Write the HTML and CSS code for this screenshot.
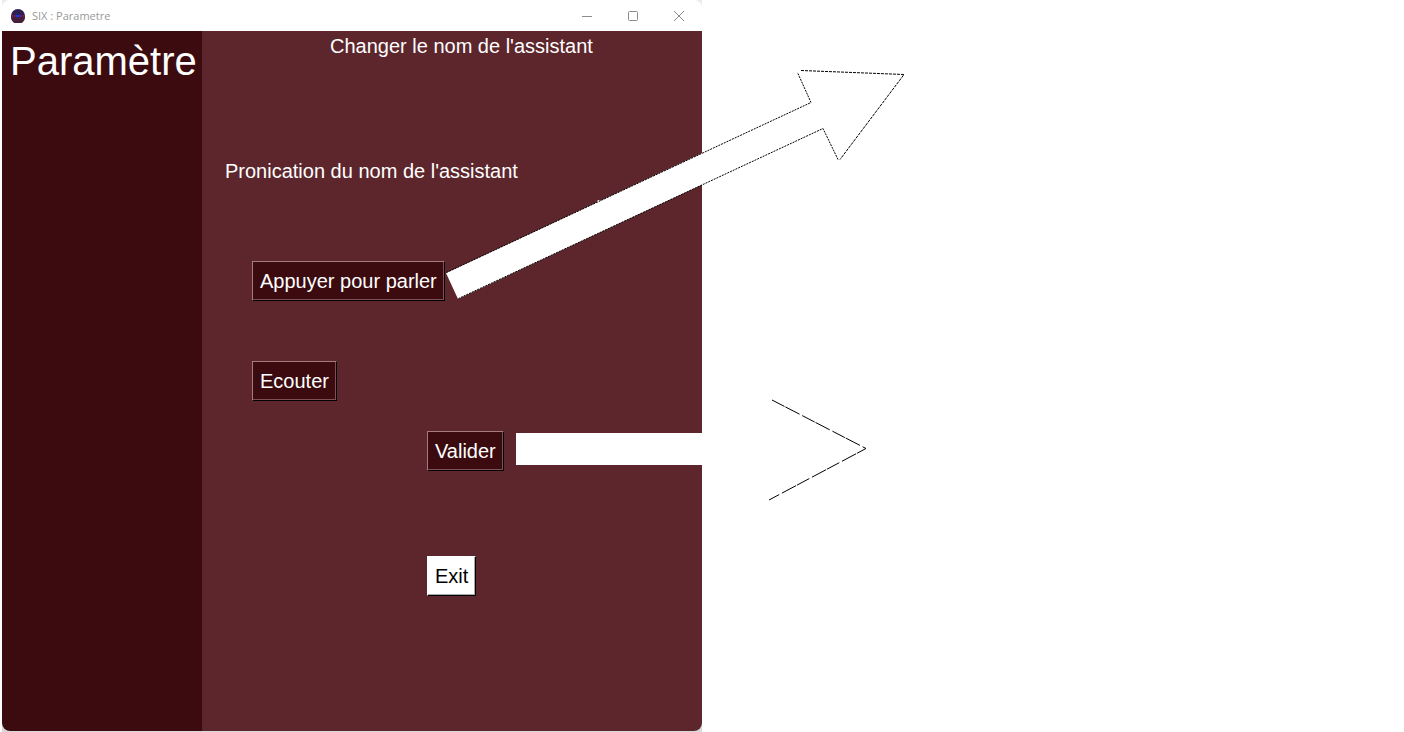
FILE: index.html
```html
<!DOCTYPE html>
<html lang="fr">
<head>
<meta charset="utf-8">
<title>SIX : Parametre</title>
<link rel="stylesheet" href="styles.css">
</head>
<body>
<div class="stage">
  <div class="backdrop">
    <section class="window">
      <header class="titlebar">
        <svg class="app-icon" viewBox="0 0 14 14" aria-hidden="true">
          <circle cx="7" cy="7" r="7" fill="#2e2050"/>
          <path d="M0 8a7 7 0 0 0 14 0z" fill="#44203c"/>
          <path d="M1.500 6v2M3.500 6v2M10.500 6v2M12.500 6v2" stroke="#b01030"/>
          <path d="M5 7h4" stroke="#1838e0" stroke-width="2"/>
          <path d="M4 7h6" stroke="#1838e0"/>
        </svg>
        <span class="caption">SIX : Parametre</span>
        <div class="controls">
          <button class="control" type="button" aria-label="Réduire"><svg viewBox="0 0 12 12"><path d="M1 6.500h10"/></svg></button>
          <button class="control" type="button" aria-label="Agrandir"><svg viewBox="0 0 12 12"><rect x="1.500" y="1.500" width="9" height="9" rx="1"/></svg></button>
          <button class="control" type="button" aria-label="Fermer"><svg viewBox="0 0 12 12"><path d="M1 1l10 10M11 1L1 11"/></svg></button>
        </div>
      </header>
      <div class="body">
        <aside class="sidebar"><h1 class="title">Paramètre</h1></aside>
        <main class="panel">
          <h2 class="label name-label">Changer le nom de l'assistant</h2>
          <h2 class="label voice-label">Pronication du nom de l'assistant</h2>
          <div class="voice-actions">
            <button class="button" type="button">Appuyer pour parler</button>
            <button class="button" type="button">Ecouter</button>
          </div>
          <div class="form-actions">
            <button class="button" type="button">Valider</button>
            <button class="button exit" type="button">Exit</button>
          </div>
        </main>
      </div>
    </section>
  </div>
  <svg class="arrows" width="480" height="450" viewBox="440 60 480 450" aria-hidden="true">
    <path d="M446 273L811 102L797 72L801 70L904 75L839 160L823 128L458 299z" fill="#fff"/>
    <path d="M596 203l2-3 4 1z" fill="#fff"/>
    <path class="outline" d="M446.500 272.500L811 102.500L797.500 72.500M838 159.500L823 128.500L458.500 298.500"/>
    <path class="tip" d="M801 70.500L904 74.500L840 159.500"/>
    <path d="M516 433h200v32H516z" fill="#fff"/>
    <path class="head" d="M772 400L866 448.500L769 500"/>
  </svg>
</div>
</body>
</html>
```
FILE: styles.css
```css
* {
  box-sizing: border-box;
}

body {
  margin: 0;
  background: #fff;
  font-family: "Liberation Sans", Arial, sans-serif;
}

.stage {
  position: relative;
  display: grid;
  grid-template-columns: 1fr 1fr;
  min-height: 100vh;
}

.backdrop {
  display: flex;
  margin-left: 2px;
  padding-bottom: 1px;
  background: linear-gradient(#ececec, #d8d8d8);
}

.window {
  flex: 1;
  display: flex;
  flex-direction: column;
  overflow: hidden;
  border-radius: 8px;
  background: #fff;
}

.titlebar {
  display: flex;
  align-items: center;
  height: 31px;
  padding-left: 9px;
}

.app-icon {
  width: 14px;
  height: 14px;
  margin-right: 7px;
}

.caption {
  color: #999;
  font: 11px/16px "Open Sans", "Noto Sans", sans-serif;
}

.controls {
  display: flex;
  margin-left: auto;
}

.control {
  display: grid;
  place-items: center;
  width: 46px;
  height: 31px;
  padding: 0;
  border: 0;
  background: none;
}

.control svg {
  width: 12px;
  height: 12px;
  fill: none;
  stroke: #8c8c8c;
}

.body {
  flex: 1;
  display: grid;
  grid-template-columns: 2fr 5fr;
}

.sidebar {
  background: #3b0b0f;
}

.title {
  margin: 7px 0 0 8px;
  color: #fff;
  font-size: 40px;
  font-weight: 400;
  line-height: 46px;
}

.panel {
  background: #5d262c;
}

.label {
  margin: 0;
  color: #fff;
  font-size: 20px;
  font-weight: 400;
  line-height: 30px;
}

.name-label {
  padding-left: 128px;
}

.voice-label {
  margin-top: 95px;
  padding-left: 23px;
}

.voice-actions,
.form-actions {
  display: flex;
  flex-direction: column;
  align-items: flex-start;
}

.voice-actions {
  gap: 60px;
  margin-top: 75px;
  padding-left: 50px;
}

.form-actions {
  gap: 85px;
  margin-top: 30px;
  padding-left: 225px;
}

.button {
  height: 40px;
  padding: 0 7px;
  border: 1px solid;
  border-color: #a57b7f #000 #000 #a57b7f;
  border-radius: 0;
  background: #3b0b0f;
  box-shadow: inset -1px -1px #7c5054;
  color: #fff;
  font: 20px/30px "Liberation Sans", Arial, sans-serif;
}

.exit {
  border-color: #fff #000 #000 #fff;
  background: #fff;
  box-shadow: inset -1px -1px #a8a8a8;
  color: #000;
}

.arrows {
  position: absolute;
  top: 60px;
  left: 440px;
  pointer-events: none;
}

.outline,
.tip,
.head {
  fill: none;
  stroke: #000;
}

.outline {
  stroke-dasharray: 2 1;
}

.tip {
  stroke-dasharray: 3 1;
}

.head {
  stroke-dasharray: 14 1 16 3;
}
```
